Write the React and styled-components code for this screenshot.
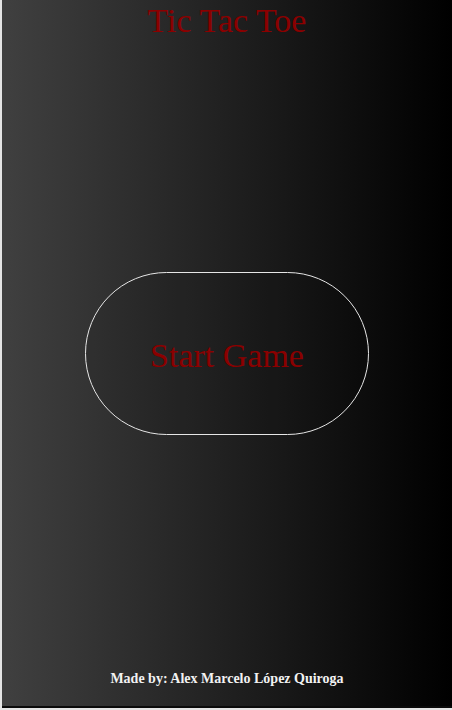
import styled, { createGlobalStyle } from "styled-components"

const GlobalStyle = createGlobalStyle`
html, body {
  margin: 0;
  padding: 0;
  background: #e4e4e4;
}
* {
  box-sizing: border-box;
}
`

const App = () => {
    return (
        <>
            <GlobalStyle />
            <Page>
                <Title>Tic Tac Toe</Title>
                <Middle>
                    <StartButton>Start Game</StartButton>
                </Middle>
                <Footer>Made by: Alex Marcelo López Quiroga</Footer>
            </Page>
        </>
    )
}

export default App


const Page = styled.main`
margin-left: 2px;
height: 708px;
display: flex;
flex-direction: column;
align-items: center;
background: linear-gradient(to right, #404040, #000000);
font-family: "Liberation Serif", "DejaVu Serif", serif;
border-bottom: 2px solid #0a0a0a;
`

const Title = styled.h1`
margin: 0;
padding-top: 2px;
font-size: 34px;
font-weight: normal;
line-height: 38px;
color: #8b0000;
`

const Middle = styled.div`
flex: 1;
display: flex;
align-items: center;
justify-content: center;
padding-bottom: 4px;
`

const StartButton = styled.button`
width: 284px;
height: 163px;
padding-top: 6px;
border: 1px solid #e6e6e6;
border-radius: 82px;
background: rgba(0, 0, 0, 0.08);
color: #8b0000;
font-family: inherit;
font-size: 34px;
cursor: pointer;
`

const Footer = styled.footer`
padding-bottom: 19px;
font-size: 14px;
font-weight: bold;
color: #f2f2f2;
`
